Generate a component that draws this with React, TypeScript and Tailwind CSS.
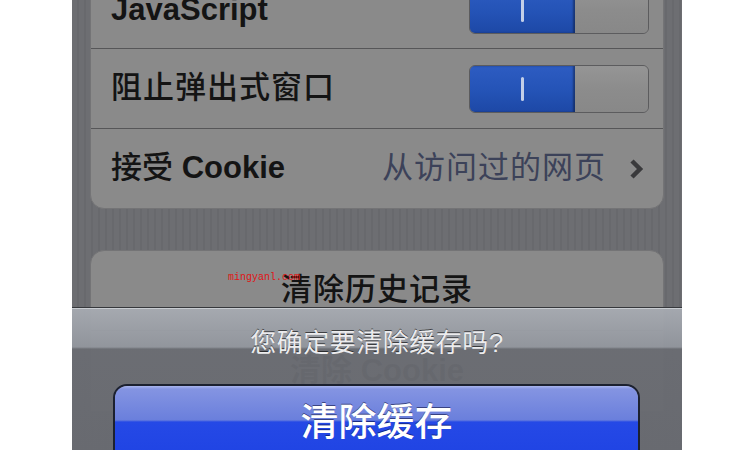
import React from "react";

const FONT = "font-['Liberation_Sans','Noto_Sans_CJK_SC',sans-serif]";

function Toggle() {
    return (
        <div className="flex h-[48px] w-[180px] overflow-hidden rounded-[6px] border border-[#5c5c5e] shadow-[inset_0_1px_2px_rgba(0,0,0,0.3)]">
            <div className="flex w-[105px] items-center justify-center bg-[linear-gradient(to_bottom,#2d5cc2,#2453b6_55%,#1d48a6)] shadow-[inset_-2px_0_2px_rgba(0,0,0,0.35)]">
                <div className="h-[24px] w-[3px] rounded-sm bg-[#c3cfe8]" />
            </div>
            <div className="flex-1 bg-[linear-gradient(to_bottom,#959595,#8c8c8c_50%,#888888)]" />
        </div>
    );
}

function Chevron() {
    return (
        <svg width="16" height="20" viewBox="0 0 16 20" className="ml-[22px]">
            <polyline points="4,2 12,10 4,18" fill="none" stroke="#3a3a3c" strokeWidth="4.5" strokeLinejoin="miter" />
        </svg>
    );
}

export default function App() {
    return (
        <div className={`flex h-[450px] w-[750px] justify-center bg-white pl-[4px] ${FONT}`}>
            <div className="relative h-[450px] w-[610px] overflow-hidden bg-[repeating-linear-gradient(90deg,#6d6e72_0px,#6d6e72_5px,#68696d_5px,#68696d_7px)]">
                {/* Group 1 */}
                <div className="mx-[18px] mt-[-29px] overflow-hidden rounded-[14px] border border-[#747476] bg-[#8a8a8a]">
                    <div className="flex h-[77px] items-center justify-between border-b border-[#565658] pl-[20px] pr-[14px]">
                        <span className="text-[31px] font-bold text-[#141414]">JavaScript</span>
                        <Toggle />
                    </div>
                    <div className="flex h-[80px] items-center justify-between border-b border-[#565658] pl-[20px] pr-[14px]">
                        <span className="text-[31px] font-medium tracking-[1px] text-[#141414]">阻止弹出式窗口</span>
                        <Toggle />
                    </div>
                    <div className="flex h-[79px] items-center pl-[20px] pr-[19px]">
                        <span className="text-[31px] font-medium text-[#141414]">
                            接受 <span className="font-bold">Cookie</span>
                        </span>
                        <span className="ml-auto text-[31px] tracking-[1px] text-[#3c4259]">从访问过的网页</span>
                        <Chevron />
                    </div>
                </div>

                {/* Group 2 */}
                <div className="mx-[18px] mt-[41px] overflow-hidden rounded-t-[14px] border border-[#747476] bg-[#8a8a8a]">
                    <div className="flex h-[80px] items-center justify-center border-b border-[#565658]">
                        <span className="text-[31px] font-medium tracking-[1px] text-[#141414]">清除历史记录</span>
                    </div>
                    <div className="flex h-[80px] items-center justify-center">
                        <span className="text-[31px] font-bold text-[#141414]">
                            清除 Cookie
                        </span>
                    </div>
                </div>

                {/* watermark */}
                <span className="absolute left-[156px] top-[273px] font-['Liberation_Mono',monospace] text-[10px] leading-none text-[#e01515]">
                    mingyanl.com
                </span>

                {/* Action sheet */}
                <div className="absolute inset-x-0 bottom-0 top-[307px] border-t border-[#36383c]">
                    <div className="h-full border-t border-[#c8ccd1] bg-[linear-gradient(to_bottom,rgba(166,170,177,0.96)_0px,rgba(146,150,157,0.96)_38px,rgba(106,108,114,0.96)_40px,rgba(104,106,112,0.96)_100%)]">
                        <div className="flex h-[75px] items-start justify-center pt-[21px]">
                            <span className="text-[26px] leading-[26px] tracking-[0.5px] text-[#ececee] [text-shadow:0_-1px_0_rgba(0,0,0,0.6)]">
                                您确定要清除缓存吗?
                            </span>
                        </div>
                        <div className="ml-[41px] w-[527px] rounded-[14px] border-2 border-[#1c2130] shadow-[0_1px_0_rgba(255,255,255,0.25)]">
                            <div className="flex h-[90px] items-start justify-center rounded-[12px] bg-[linear-gradient(to_bottom,#aab6ee_0px,#8494e2_3px,#6a7fdc_34px,#2549e6_36px,#1c40e2_100%)] pt-[17px]">
                                <span className="text-[38px] font-medium leading-[38px] text-white [text-shadow:0_-1px_0_rgba(0,0,40,0.5)]">
                                    清除缓存
                                </span>
                            </div>
                        </div>
                    </div>
                </div>
            </div>
        </div>
    );
}
